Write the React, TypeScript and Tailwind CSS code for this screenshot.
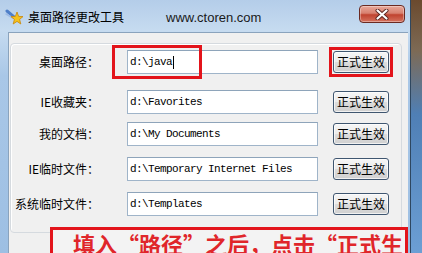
const rows = [
  { label: '桌面路径：', value: 'd:\\java', mt: 'mt-[6px]', caret: true },
  { label: 'IE收藏夹：', value: 'd:\\Favorites', mt: 'mt-[16px]' },
  { label: '我的文档：', value: 'd:\\My Documents', mt: 'mt-[8px]' },
  { label: 'IE临时文件：', value: 'd:\\Temporary Internet Files', mt: 'mt-[11px]' },
  { label: '系统临时文件：', value: 'd:\\Templates', mt: 'mt-[11px]' },
];

const cjk = "font-['Noto_Sans_CJK_SC','Noto_Sans',sans-serif]";

function TitleIcon() {
  return (
    <svg width="20" height="18" viewBox="0 0 20 18">
      <path d="M2 2 L9 8" stroke="#4f7fc8" strokeWidth="3" strokeLinecap="round" />
      <path d="M1 5 L8 9" stroke="#9dbbe6" strokeWidth="1.5" strokeLinecap="round" />
      <path
        d="M12 3 L13.6 7.4 L18 7.6 L14.6 10.4 L15.8 15 L12 12.4 L8.2 15 L9.4 10.4 L6 7.6 L10.4 7.4 Z"
        fill="#f5c21b"
        stroke="#c8860a"
        strokeWidth="0.8"
      />
    </svg>
  );
}

function CloseButton() {
  return (
    <div className="mt-[5px] self-start mr-[5px] ml-auto w-[46px] h-[18px] rounded-[4px] border border-[#6b2a22] bg-[linear-gradient(to_bottom,#e9a99b_0%,#d8806f_45%,#c0432f_55%,#d5725f_100%)] flex items-center justify-center shadow-[inset_0_0_0_1px_rgba(255,255,255,0.35)]">
      <svg width="14" height="11" viewBox="0 0 14 11">
        <path d="M2.5 1.5 L11.5 9.5 M11.5 1.5 L2.5 9.5" stroke="#5a2520" strokeWidth="4" strokeLinecap="round" />
        <path d="M2.5 1.5 L11.5 9.5 M11.5 1.5 L2.5 9.5" stroke="#ffffff" strokeWidth="2.2" strokeLinecap="round" />
      </svg>
    </div>
  );
}

export default function App() {
  return (
    <div className="relative w-[422px] h-[253px] overflow-hidden flex bg-[linear-gradient(to_bottom,#6b4a2e_0%,#7d6a55_20%,#4f7fb5_45%,#6c9fd4_100%)]">
      {/* Window */}
      <div className="w-[411px] h-full flex flex-col bg-[linear-gradient(to_bottom,#b4cde9_0%,#c6dbf0_12%,#a9c7e7_30%,#9dbfe3_100%)] border-r border-[#2e4760]">
        {/* Title bar */}
        <div className="h-[32px] flex items-center shrink-0">
          <div className="ml-[5px] mt-[4px]">
            <TitleIcon />
          </div>
          <span className={`ml-[3px] mt-[2px] text-[12px] leading-none text-black ${cjk}`}>桌面路径更改工具</span>
          <span className="ml-[42px] mt-[2px] text-[13px] leading-none text-[#1a1a1a] font-['Liberation_Sans',sans-serif]">
            www.ctoren.com
          </span>
          <CloseButton />
        </div>

        {/* Client area */}
        <div className="ml-[8px] w-[400px] flex-1 bg-[#f0f0f0] border-t border-l border-[#8aa3bd]">
          <div className="ml-[1px] mt-[10px] w-[392px] h-[190px] border border-[#d5dadf] rounded-[4px] shadow-[inset_1px_1px_0_#ffffff]">
            {rows.map((r) => (
              <div key={r.label} className={`flex items-center h-[24px] ${r.mt}`}>
                <div className={`w-[88px] text-right text-[12px] leading-none text-black ${cjk}`}>{r.label}</div>
                <div className="ml-[28px] w-[191px] h-[24px] bg-white border border-[#9fb4c9] border-t-[#8ea4ba] flex items-center pl-[2px]">
                  <span className="text-[11px] tracking-[-0.6px] leading-none text-black font-['Liberation_Mono',monospace] whitespace-pre">
                    {r.value}
                  </span>
                  {r.caret && <span className="ml-[1px] w-[1px] h-[13px] bg-black" />}
                </div>
                <button className={`ml-[15px] w-[56px] h-[22px] rounded-[3px] border border-[#3f5670] bg-[linear-gradient(to_bottom,#f6f6f6_0%,#ebebeb_50%,#dddddd_51%,#d0d0d0_100%)] text-[12px] leading-none text-black ${cjk} shadow-[inset_0_0_0_1px_rgba(255,255,255,0.7)]`}>
                  正式生效
                </button>
              </div>
            ))}
          </div>
        </div>
      </div>

      {/* Annotation: red box around the first path */}
      <div className="absolute left-[112px] top-[45px] w-[90px] h-[34px] border-[3px] border-[#e3141b]" />
      {/* Annotation: red box around the first button */}
      <div className="absolute left-[329px] top-[47px] w-[64px] h-[30px] border-[3px] border-[#e3141b]" />
      {/* Annotation: bottom note */}
      <div className="absolute left-[50px] top-[227px] w-[358px] h-[40px] border-[3px] border-[#e3141b] bg-[#f3f3f3]">
        <div className={`ml-[20px] mt-[2px] text-[22px] leading-[22px] font-bold text-[#e0262a] whitespace-nowrap ${cjk}`}>
          填入“路径”之后，点击“正式生
        </div>
      </div>
    </div>
  );
}
